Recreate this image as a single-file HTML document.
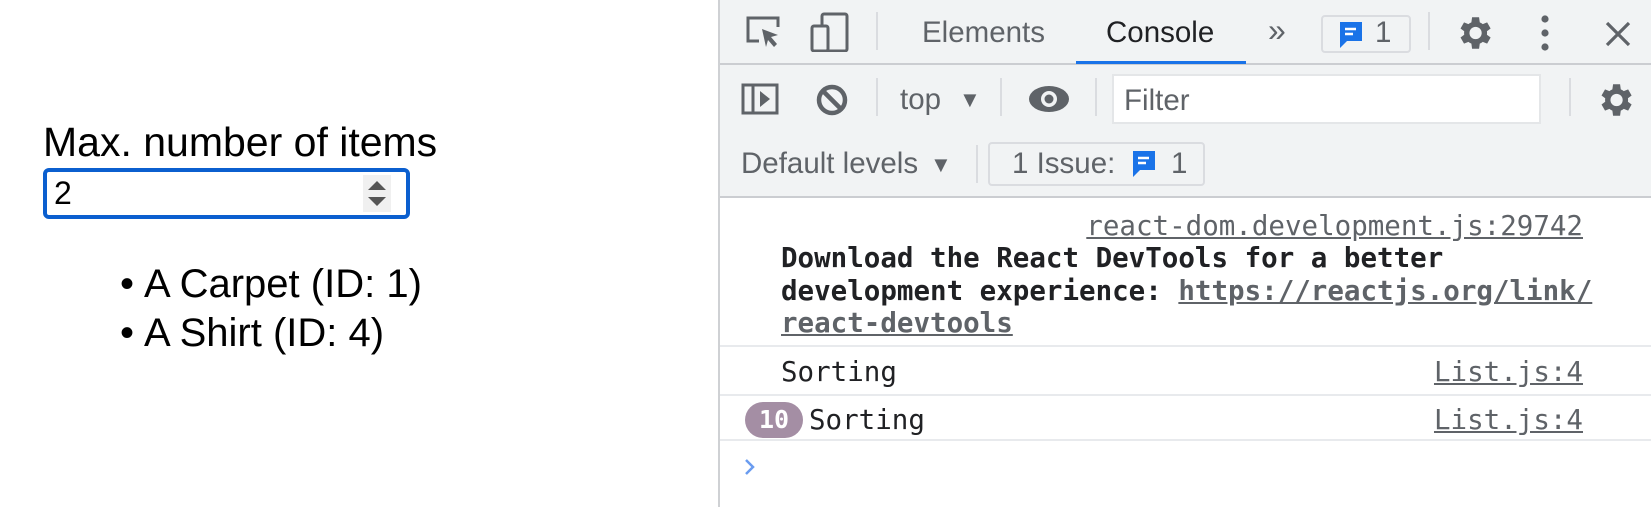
<!DOCTYPE html>
<html><head><style>
*{margin:0;padding:0;box-sizing:border-box}
body{width:1651px;height:507px;position:relative;overflow:hidden;background:#fff;font-family:"Liberation Sans",Arial,sans-serif}
.a{position:absolute;white-space:nowrap}
.ui{font-size:29.5px;color:#5f6368;line-height:34px}
.mono{font-family:"DejaVu Sans Mono","Liberation Mono",monospace;font-size:27.5px;color:#202124;line-height:32px}
.lnk{color:#5f6368;text-decoration:underline}
.sep{position:absolute;width:2px;background:#dadce0}
.hl{position:absolute;left:720px;right:0;height:2px;background:#e8eaed}
</style></head><body>
<!-- left page -->
<div class="a" style="left:43px;top:119px;font-size:41px;color:#000">Max. number of items</div>
<div class="a" style="left:43px;top:168px;width:367px;height:51px;border:4px solid #0b5fcf;border-radius:6px"></div>
<div class="a" style="left:54px;top:175px;font-size:32px;color:#000">2</div>
<div class="a" style="left:363px;top:175px;width:28px;height:37px;background:#f0f0f0"></div>
<svg class="a" style="left:366px;top:178px" width="22" height="32"><path d="M11 3 L20 12 L2 12Z M2 19 L20 19 L11 28Z" fill="#555"/></svg>
<div class="a" style="left:120px;top:260px;font-size:40px;color:#000;line-height:48.5px">
<div>•<span style="margin-left:10px">A Carpet (ID: 1)</span></div><div>•<span style="margin-left:10px">A Shirt (ID: 4)</span></div></div>

<!-- devtools -->
<div class="a" style="left:718px;top:0;width:2px;height:507px;background:#cfd1d4"></div>
<div class="a" style="left:720px;top:0;right:0;height:197px;background:#f1f3f4"></div>
<div class="a" style="left:720px;top:63px;right:0;height:2px;background:#cbcdd1"></div>
<div class="a" style="left:720px;top:196px;right:0;height:2px;background:#cbcdd1"></div>
<!-- row1 -->
<svg class="a" style="left:745px;top:15px" width="40" height="36" fill="none" stroke="#5f6368" stroke-width="3"><path d="M14 26H3V3h30v9"/><path d="M17 14l16 6-7 2 6 7-3 3-6-7-2 7z" fill="#5f6368" stroke="none"/></svg>
<svg class="a" style="left:810px;top:12px" width="40" height="40" fill="none" stroke="#5f6368" stroke-width="3"><rect x="12" y="2" width="25" height="37" rx="2"/><rect x="2" y="14" width="16" height="25" rx="2" fill="#f1f3f4"/></svg>
<div class="sep" style="left:876px;top:12px;height:38px"></div>
<div class="a ui" style="left:922px;top:16px">Elements</div>
<div class="a ui" style="left:1106px;top:16px;color:#202124">Console</div>
<div class="a" style="left:1076px;top:61px;width:170px;height:3px;background:#1a73e8"></div>
<div class="a ui" style="left:1268px;top:13px;font-size:32px">»</div>
<div class="a" style="left:1321px;top:15px;width:90px;height:38px;border:2px solid #dadce0;border-radius:4px"></div>
<svg class="a" style="left:1338px;top:20px" width="26" height="30"><path d="M2 2h22v19H9l-7 7z" fill="#1a73e8"/><path d="M7 9h11M7 14h8" stroke="#fff" stroke-width="2.5"/></svg>
<div class="a ui" style="left:1375px;top:16px">1</div>
<div class="sep" style="left:1428px;top:12px;height:38px"></div>
<svg class="a" style="left:1453px;top:12px" width="42" height="42" viewBox="0 0 24 24"><path fill="#5f6368" d="M19.4 13a7.5 7.5 0 000-2l2.1-1.6-2-3.5-2.5 1a7 7 0 00-1.7-1L14.9 3h-4l-.4 2.9a7 7 0 00-1.7 1l-2.5-1-2 3.5L6.4 11a7.5 7.5 0 000 2l-2.1 1.6 2 3.5 2.5-1a7 7 0 001.7 1l.4 2.9h4l.4-2.9a7 7 0 001.7-1l2.5 1 2-3.5zM12.9 15.5a3.5 3.5 0 110-7 3.5 3.5 0 010 7z"/></svg>
<svg class="a" style="left:1537px;top:14px" width="16" height="38"><circle cx="8" cy="5" r="3.6" fill="#5f6368"/><circle cx="8" cy="19" r="3.6" fill="#5f6368"/><circle cx="8" cy="33" r="3.6" fill="#5f6368"/></svg>
<svg class="a" style="left:1604px;top:20px" width="28" height="28"><path d="M3 3l22 22M25 3L3 25" stroke="#5f6368" stroke-width="3.2"/></svg>
<!-- row2 -->
<svg class="a" style="left:741px;top:83px" width="38" height="32" fill="none" stroke="#5f6368" stroke-width="3"><rect x="2" y="2" width="34" height="28"/><path d="M12 2v28"/><path d="M19 8l10 8-10 8z" fill="#5f6368" stroke="none"/></svg>
<svg class="a" style="left:815px;top:83px" width="34" height="34" fill="none" stroke="#5f6368" stroke-width="4.5"><circle cx="17" cy="17" r="13"/><path d="M8 8l18 18"/></svg>
<div class="sep" style="left:876px;top:78px;height:38px"></div>
<div class="a ui" style="left:900px;top:83px">top</div>
<div class="a ui" style="left:959px;top:83px;font-size:22px">▼</div>
<div class="sep" style="left:1000px;top:78px;height:38px"></div>
<svg class="a" style="left:1028px;top:84px" width="42" height="30"><ellipse cx="21" cy="15" rx="20" ry="13" fill="#5f6368"/><circle cx="21" cy="15" r="8" fill="#f1f3f4"/><circle cx="21" cy="15" r="4.5" fill="#5f6368"/></svg>
<div class="sep" style="left:1095px;top:78px;height:38px"></div>
<div class="a" style="left:1112px;top:74px;width:429px;height:50px;background:#fff;border:2px solid #e4e6e8"></div>
<div class="a ui" style="left:1124px;top:84px">Filter</div>
<div class="sep" style="left:1569px;top:78px;height:38px"></div>
<svg class="a" style="left:1594px;top:79px" width="42" height="42" viewBox="0 0 24 24"><path fill="#5f6368" d="M19.4 13a7.5 7.5 0 000-2l2.1-1.6-2-3.5-2.5 1a7 7 0 00-1.7-1L14.9 3h-4l-.4 2.9a7 7 0 00-1.7 1l-2.5-1-2 3.5L6.4 11a7.5 7.5 0 000 2l-2.1 1.6 2 3.5 2.5-1a7 7 0 001.7 1l.4 2.9h4l.4-2.9a7 7 0 001.7-1l2.5 1 2-3.5zM12.9 15.5a3.5 3.5 0 110-7 3.5 3.5 0 010 7z"/></svg>
<!-- row3 -->
<div class="a ui" style="left:741px;top:147px">Default levels</div>
<div class="a ui" style="left:930px;top:148px;font-size:22px">▼</div>
<div class="sep" style="left:976px;top:145px;height:38px"></div>
<div class="a" style="left:988px;top:142px;width:217px;height:44px;border:2px solid #dadce0;border-radius:4px"></div>
<div class="a ui" style="left:1012px;top:147px">1 Issue:</div>
<svg class="a" style="left:1131px;top:149px" width="26" height="30"><path d="M2 2h22v19H9l-7 7z" fill="#1a73e8"/><path d="M7 9h11M7 14h8" stroke="#fff" stroke-width="2.5"/></svg>
<div class="a ui" style="left:1171px;top:147px">1</div>
<!-- console -->
<div class="a mono lnk" style="right:68px;top:210px">react-dom.development.js:29742</div>
<div class="a mono" style="left:781px;top:242px;font-weight:bold;line-height:32.5px">Download the React DevTools for a better<br>development experience: <span class="lnk">https://reactjs.org/link/</span><br><span class="lnk">react-devtools</span></div>
<div class="hl" style="top:345px"></div>
<div class="a mono" style="left:781px;top:356px">Sorting</div>
<div class="a mono lnk" style="right:68px;top:356px">List.js:4</div>
<div class="hl" style="top:394px"></div>
<div class="a" style="left:745px;top:402px;width:58px;height:36px;border-radius:18px;background:#a48ea4;color:#fff;font-family:'DejaVu Sans Mono',monospace;font-weight:bold;font-size:25px;text-align:center;line-height:36px">10</div>
<div class="a mono" style="left:809px;top:404px">Sorting</div>
<div class="a mono lnk" style="right:68px;top:404px">List.js:4</div>
<div class="hl" style="top:439px"></div>
<svg class="a" style="left:743px;top:457px" width="14" height="20"><path d="M3 3l7 7-7 7" stroke="#6a9cf0" stroke-width="2.5" fill="none"/></svg>
</body></html>
